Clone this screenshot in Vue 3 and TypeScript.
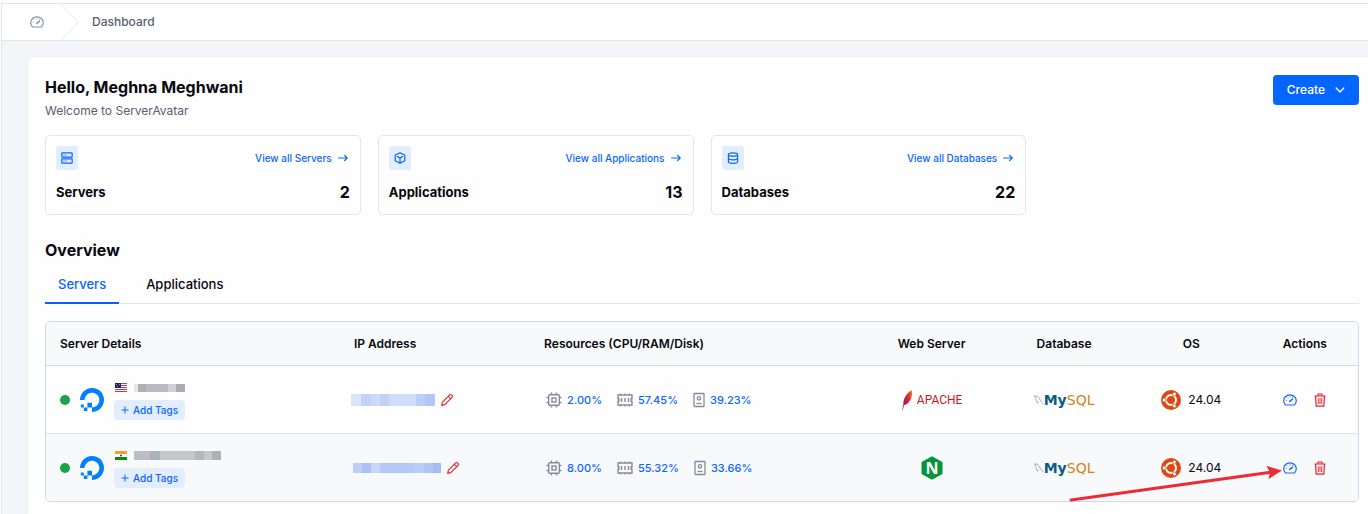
<script setup lang="ts">
import { ref } from 'vue'

interface Stat {
  name: string
  count: number
  icon: 'servers' | 'apps' | 'db'
}
interface Server {
  id: number
  flag: 'us' | 'in'
  cpu: string
  ram: string
  disk: string
  web: 'apache' | 'nginx'
  os: string
}

const stats: Stat[] = [
  { name: 'Servers', count: 2, icon: 'servers' },
  { name: 'Applications', count: 13, icon: 'apps' },
  { name: 'Databases', count: 22, icon: 'db' },
]
const servers: Server[] = [
  { id: 1, flag: 'us', cpu: '2.00%', ram: '57.45%', disk: '39.23%', web: 'apache', os: '24.04' },
  { id: 2, flag: 'in', cpu: '8.00%', ram: '55.32%', disk: '33.66%', web: 'nginx', os: '24.04' },
]
const tabs = ['Servers', 'Applications']
const activeTab = ref('Servers')
</script>

<template>
  <div class="page">
    <header class="topbar">
      <a class="home" href="#" aria-label="Home">
        <svg width="14" height="14" viewBox="0 0 14 14" fill="none" stroke="currentColor" stroke-width="1.200" stroke-linecap="round" stroke-linejoin="round">
          <path d="M2.600 12h8.800c1.200-1.100 1.900-2.500 1.900-4.200a6.300 6 0 0 0-12.600 0c0 1.700.7 3.100 1.900 4.200z" />
          <path d="M6.600 8.400 9.600 6.200" stroke-width="1.500" />
          <path d="M7 3.900v.2M4.400 4.900l.1.100M3.200 7.300h.2M9.600 4.400h.1" stroke-width="1" />
        </svg>
      </a>
      <svg class="chevron" width="20" height="36" viewBox="0 0 20 36" fill="none" stroke="#e2e4ea" stroke-width="1">
        <path d="M.5 0 18.500 18 .5 36" />
      </svg>
      <span class="crumb">Dashboard</span>
    </header>

    <main class="content">
      <section class="panel">
        <div class="intro">
          <div>
            <h1>Hello, Meghna Meghwani</h1>
            <p>Welcome to ServerAvatar</p>
          </div>
          <button class="create" type="button">
            Create
            <svg width="10" height="10" viewBox="0 0 10 10" fill="none" stroke="currentColor" stroke-width="1.300" stroke-linecap="round" stroke-linejoin="round"><path d="M1.200 3 5 7l3.800-4" /></svg>
          </button>
        </div>

        <div class="stats">
          <article v-for="s in stats" :key="s.name" class="stat">
            <div class="line">
              <span class="badge">
                <svg v-if="s.icon === 'servers'" width="12" height="12" viewBox="0 0 12 12" fill="none" stroke="currentColor" stroke-width="1.200">
                  <rect x=".8" y=".8" width="10.400" height="4.400" rx=".6" /><rect x=".8" y="6.800" width="10.400" height="4.400" rx=".6" />
                  <path d="M2.400 3h1.200M4.400 3h1M2.400 9h1.200M4.400 9h1" stroke-width=".9" />
                </svg>
                <svg v-else-if="s.icon === 'apps'" width="12" height="12" viewBox="0 0 12 12" fill="none" stroke="currentColor" stroke-width="1.200" stroke-linejoin="round">
                  <path d="M6 .7 10.800 3.300v5.400L6 11.300 1.200 8.700V3.300zM3 4.400 6 6l3-1.600M6 6v5.200" />
                </svg>
                <svg v-else width="12" height="12" viewBox="0 0 12 12" fill="none" stroke="currentColor" stroke-width="1.200">
                  <ellipse cx="6" cy="2.500" rx="4.600" ry="1.700" /><path d="M1.400 2.500v7C1.400 10.500 3.400 11.300 6 11.300s4.600-.8 4.600-1.800v-7M1.400 6C1.400 7 3.400 7.800 6 7.800S10.600 7 10.600 6" />
                </svg>
              </span>
              <a class="view" href="#">
                View all {{ s.name }}
                <svg width="10" height="10" viewBox="0 0 10 10" fill="none" stroke="currentColor" stroke-width="1.200" stroke-linecap="round" stroke-linejoin="round"><path d="M.6 5h8.600M6.600 2.400 9.200 5 6.600 7.600" /></svg>
              </a>
            </div>
            <div class="line">
              <h3>{{ s.name }}</h3>
              <strong>{{ s.count }}</strong>
            </div>
          </article>
        </div>

        <h2>Overview</h2>
        <div class="tabs" role="tablist">
          <button v-for="t in tabs" :key="t" type="button" role="tab" :aria-selected="activeTab === t" :class="{ active: activeTab === t }" @click="activeTab = t">{{ t }}</button>
        </div>

        <div class="table-wrap">
          <table>
            <colgroup>
              <col class="c-details" /><col class="c-ip" /><col class="c-res" /><col class="c-web" /><col class="c-db" /><col class="c-os" /><col class="c-act" />
            </colgroup>
            <thead>
              <tr>
                <th>Server Details</th>
                <th>IP Address</th>
                <th>Resources (CPU/RAM/Disk)</th>
                <th class="mid">Web Server</th>
                <th class="mid">Database</th>
                <th class="mid">OS</th>
                <th class="mid">Actions</th>
              </tr>
            </thead>
            <tbody>
              <tr v-for="s in servers" :key="s.id">
                <td>
                  <div class="details">
                    <span class="dot"></span>
                    <svg width="24" height="24" viewBox="0 0 24 24" fill="#0080ff">
                      <path d="M12 24v-4.650c4.930 0 8.740-4.880 6.850-10.070a6.950 6.950 0 0 0-4.150-4.150C9.510 3.250 4.630 7.060 4.630 11.980H0C0 4.140 7.590-1.980 15.810.59a11.500 11.500 0 0 1 7.600 7.600C25.980 16.410 19.860 24 12 24z" />
                      <path d="M7.400 14.800H12v4.600H7.400zM3.800 19.400h3.600V23H3.800zM.8 16.400h3v3h-3z" />
                    </svg>
                    <div class="names">
                      <div class="host">
                        <svg v-if="s.flag === 'us'" width="12" height="9" viewBox="0 0 12 9">
                          <path fill="#fff" d="M0 0h12v9H0z" /><path fill="#d0384a" d="M0 0h12v1H0zM0 2h12v1H0zM0 4h12v1H0zM0 6h12v1H0zM0 8h12v1H0z" /><path fill="#1b2a5c" d="M0 0h6v5H0z" /><path fill="#8d94b5" d="M1 1h1v1H1zM4 1h1v1H4zM2 3h1v1H2z" />
                        </svg>
                        <svg v-else width="12" height="9" viewBox="0 0 12 9">
                          <path fill="#fff" d="M0 0h12v9H0z" /><path fill="#ff9933" d="M0 0h12v3H0z" /><path fill="#128807" d="M0 6h12v3H0z" /><circle cx="6" cy="4.500" r="1" fill="#223388" />
                        </svg>
                        <span class="masked" :class="'host-' + s.id"></span>
                      </div>
                      <button class="tag" type="button">
                        <svg width="8" height="8" viewBox="0 0 8 8" stroke="currentColor"><path d="M4 .5v7M.5 4h7" /></svg>
                        Add Tags
                      </button>
                    </div>
                  </div>
                </td>
                <td>
                  <div class="ip">
                    <span class="masked" :class="'ip-' + s.id"></span>
                    <button class="plain red" type="button" aria-label="Edit IP address">
                      <svg width="12" height="12" viewBox="0 0 12 12" fill="none" stroke="currentColor" stroke-width="1.100" stroke-linejoin="round"><path d="M.7 11.400 1.400 8.200 8.700.9c1.300-1 3.400 1 2.400 2.400L3.800 10.600zM7.400 2.400 9.600 4.600" /></svg>
                    </button>
                  </div>
                </td>
                <td>
                  <div class="resources">
                    <span class="res">
                      <svg width="16" height="16" viewBox="0 0 16 16" fill="none" stroke="#858c99" stroke-width="1.400">
                        <rect x="2.700" y="2.700" width="10.600" height="10.600" rx="1" /><rect x="6" y="6" width="4" height="4" />
                        <path d="M5.500 .5v2M10.500 .5v2M5.500 13.500v2M10.500 13.500v2M.5 5.500h2M.5 10.500h2M13.500 5.500h2M13.500 10.500h2" />
                      </svg>
                      <a href="#">{{ s.cpu }}</a>
                    </span>
                    <span class="res">
                      <svg width="16" height="16" viewBox="0 0 16 16" fill="none" stroke="#858c99" stroke-width="1.400">
                        <path d="M1 3h14v3.800h-.8v2.400h.8V13H1V9.200h.8V6.800H1z" />
                        <path d="M4.500 6v4M8 6v4M11.500 6v4" />
                        <path d="M3.500 1.500V3M8 1.500V3M12.500 1.500V3M3.500 13v1.500M8 13v1.500M12.500 13v1.500" />
                      </svg>
                      <a href="#">{{ s.ram }}</a>
                    </span>
                    <span class="res">
                      <svg width="12" height="16" viewBox="0 0 12 16" fill="none" stroke="#858c99" stroke-width="1.300">
                        <rect x="1" y="1.500" width="10" height="13" rx=".6" /><circle cx="6" cy="6.300" r="1.700" /><path d="M3.500 11.500h5" />
                      </svg>
                      <a href="#">{{ s.disk }}</a>
                    </span>
                  </div>
                </td>
                <td>
                  <div v-if="s.web === 'apache'" class="brand">
                    <svg width="12" height="20" viewBox="0 0 12 20">
                      <defs>
                        <linearGradient id="feather" x1="1" y1="0" x2="0" y2="1"><stop offset="0" stop-color="#f69923" /><stop offset=".35" stop-color="#e0322f" /><stop offset=".65" stop-color="#c2185b" /><stop offset="1" stop-color="#6d4a9c" /></linearGradient>
                      </defs>
                      <path fill="url(#feather)" d="M10.800.2C11.700 2.400 11.200 6 9.600 9.200 8.100 12.300 6 14.600 3.300 15.100L1.700 19.800H1L2.400 15C1.900 11.400 3.200 8 5.300 5 6.900 2.700 8.800 1 10.800.2z" />
                      <path fill="none" stroke="#7d2050" stroke-width=".5" d="M9.500 2.500C6.500 6.500 4 11 2.700 15.500" />
                    </svg>
                    <span class="apache">APACHE</span>
                  </div>
                  <div v-else class="brand">
                    <svg width="22" height="24" viewBox="0 0 22 24" role="img" aria-label="nginx">
                      <path fill="#009639" stroke="#009639" stroke-linejoin="round" d="M11 .8 21 6.300v11.400L11 23.200 1 17.700V6.300z" />
                      <text x="11" y="17.500" text-anchor="middle" class="nginx">N</text>
                    </svg>
                  </div>
                </td>
                <td>
                  <div class="mysql">
                    <svg width="10" height="10" viewBox="0 0 10 10" fill="none" stroke="#6f9db8" stroke-width=".8" stroke-linecap="round">
                      <path d="M.6 1C2.800.4 4.500 1.800 5.500 3.800S7 7 9.200 8.800M.6 1C1.800 2 1.600 3 2 4.500S2.800 7.500 3.600 8.200L4.200 6.800" />
                    </svg>
                    <span class="word"><b>My</b>SQL</span>
                  </div>
                </td>
                <td>
                  <div class="os">
                    <svg width="20" height="20" viewBox="0 0 20 20">
                      <circle cx="10" cy="10" r="10" fill="#dd4814" />
                      <circle cx="10" cy="10" r="4.900" fill="none" stroke="#fff" stroke-width="2.200" />
                      <path stroke="#dd4814" stroke-width=".9" d="M10 10H3M10 10l3.500-6.060M10 10l3.500 6.060" />
                      <g fill="#fff" stroke="#dd4814" stroke-width=".7"><circle cx="3.200" cy="10" r="1.900" /><circle cx="13.400" cy="4.100" r="1.900" /><circle cx="13.400" cy="15.900" r="1.900" /></g>
                      <circle cx="10" cy="10" r="3.700" fill="#dd4814" />
                    </svg>
                    <span>{{ s.os }}</span>
                  </div>
                </td>
                <td>
                  <div class="actions">
                    <button class="plain blue" type="button" aria-label="Server dashboard">
                      <svg width="14" height="14" viewBox="0 0 14 14" fill="none" stroke="currentColor" stroke-width="1.200" stroke-linecap="round" stroke-linejoin="round">
                        <path d="M2.600 12h8.800c1.200-1.100 1.900-2.500 1.900-4.200a6.300 6 0 0 0-12.600 0c0 1.700.7 3.100 1.900 4.200z" />
                        <path d="M6.600 8.400 9.600 6.200" stroke-width="1.500" />
                        <path d="M7 3.900v.2M4.400 4.900l.1.100M3.200 7.300h.2M9.600 4.400h.1" stroke-width="1" />
                      </svg>
                    </button>
                    <button class="plain red" type="button" aria-label="Delete server">
                      <svg width="12" height="14" viewBox="0 0 12 14" fill="none" stroke="currentColor" stroke-width="1.200" stroke-linejoin="round">
                        <path d="M.4 3h11.200M4 3V1h4v2M1.500 3l.7 10.200h7.600L10.500 3" />
                        <path d="M4.300 5.200v5.800M6 5.200v5.800M7.700 5.200v5.800" stroke-width=".9" />
                      </svg>
                    </button>
                  </div>
                </td>
              </tr>
            </tbody>
          </table>
          <svg class="pointer" width="214" height="40" viewBox="0 0 214 40">
            <path stroke="#ec2c35" stroke-width="3" fill="none" stroke-linecap="round" d="M2 35 200 7.600" />
            <path fill="#ec2c35" d="M213 5.500 197.500 1 201 7.500 199.500 14z" />
          </svg>
        </div>
      </section>
    </main>
  </div>
</template>

<style>
body {
  margin: 0;
  background: #fdfdfe;
}
</style>

<style scoped>
.page {
  min-height: 100vh;
  box-sizing: border-box;
  padding: 3px 0 0 1px;
  display: flex;
  flex-direction: column;
  overflow: hidden;
  font-family: Inter, 'Liberation Sans', sans-serif;
  font-size: 12px;
  line-height: 16px;
  color: #06080f;
}
a {
  color: #0a66ff;
  text-decoration: none;
}
button {
  font: inherit;
  cursor: pointer;
}
svg {
  display: block;
  flex: none;
}
h1, h2, h3, p {
  margin: 0;
}
.topbar {
  display: flex;
  align-items: center;
  height: 36px;
  border: 1px solid #e2e4ea;
  border-right: 0;
  background: #fff;
}
.home {
  margin-left: 28px;
  color: #8a92a0;
}
.chevron {
  margin-left: 16px;
}
.crumb {
  margin-left: 12px;
  color: #566070;
  font-weight: 500;
}
.content {
  flex: 1;
  display: flex;
  border-left: 1px solid #e2e4ea;
  background: #f4f5f9;
  padding: 16px 0 0 26px;
}
.panel {
  flex: 1;
  min-width: 0;
  padding: 18px 9px 12px 17px;
  background: #fefefe;
  border-radius: 6px 0 0 0;
  box-shadow: 0 0 2px #dfe2e8;
}
.intro {
  display: flex;
  justify-content: space-between;
  align-items: flex-start;
  height: 60px;
}
h1, h2 {
  font-size: 16px;
  line-height: 24px;
  font-weight: 700;
}
h2 {
  margin-top: 23px;
}
.intro p {
  margin-top: 4px;
  color: #566070;
}
.create {
  display: flex;
  align-items: center;
  gap: 10px;
  height: 30px;
  padding: 0 14px;
  border: 0;
  border-radius: 4px;
  background: #0566ff;
  color: #fff;
  font-weight: 500;
}
.stats {
  display: grid;
  grid-template-columns: repeat(4, 1fr);
  gap: 17px;
}
.stat {
  border: 1px solid #e4e6ec;
  border-radius: 5px;
  padding: 10px;
  height: 58px;
  display: flex;
  flex-direction: column;
  justify-content: space-between;
}
.line {
  display: flex;
  align-items: center;
  justify-content: space-between;
}
.badge {
  display: grid;
  place-items: center;
  width: 22px;
  height: 24px;
  border-radius: 3px;
  background: #e2edff;
  color: #0a66ff;
}
.view {
  display: flex;
  align-items: center;
  gap: 6px;
  margin-right: 2px;
  font-size: 10px;
  font-weight: 500;
}
h3 {
  font-size: 13px;
  line-height: 24px;
  font-weight: 700;
}
.stat strong {
  font-size: 16px;
  line-height: 24px;
  font-weight: 700;
}
.tabs {
  display: flex;
  gap: 14px;
  margin-top: 4px;
  border-bottom: 1px solid #e1e4e9;
}
.tabs button {
  height: 38px;
  margin-bottom: -1px;
  padding: 0 13px;
  border: 0;
  border-bottom: 2px solid transparent;
  background: none;
  color: #06080f;
  font-size: 13px;
  font-weight: 500;
}
.tabs .active {
  color: #0a66ff;
  border-color: #0a5cff;
}
.table-wrap {
  position: relative;
  margin-top: 17px;
  border: 1px solid #cfd8e3;
  border-radius: 5px;
}
table {
  width: 100%;
  table-layout: fixed;
  border-collapse: separate;
  border-spacing: 0;
}
.c-details { width: 22.4%; }
.c-ip { width: 14.5%; }
.c-res { width: 25.6%; }
.c-web { width: 10%; }
.c-db { width: 10.2%; }
.c-os { width: 9.2%; }
.c-act { width: 8.1%; }
th {
  height: 43px;
  padding: 0 14px;
  border-bottom: 1px solid #d3d7de;
  background: #f8f9fb;
  text-align: left;
  font-size: 12px;
  font-weight: 600;
}
th:first-child { border-top-left-radius: 4px; }
th:last-child { border-top-right-radius: 4px; }
th.mid {
  padding: 0;
  text-align: center;
}
td {
  height: 67px;
  padding: 0;
}
tbody tr:first-child td {
  border-bottom: 1px solid #e1e4e9;
}
tbody tr:nth-child(2) td {
  background: #f8f9fb;
}
tbody tr:last-child td:first-child { border-bottom-left-radius: 4px; }
tbody tr:last-child td:last-child { border-bottom-right-radius: 4px; }
.details {
  display: flex;
  align-items: center;
  padding-left: 14px;
}
.dot {
  width: 10px;
  height: 10px;
  margin-right: 10px;
  border-radius: 50%;
  background: #16a34a;
}
.names {
  margin-left: 10px;
  padding-top: 2px;
}
.host {
  display: flex;
  align-items: center;
  height: 12px;
  padding-left: 1px;
  gap: 7px;
  margin-bottom: 6px;
}
.masked {
  display: block;
}
.host-1 {
  width: 51px;
  height: 8px;
  background: linear-gradient(90deg, #e6e6e9 4px, #adb0b7 4px 12px, #b7bac0 12px 34px, #d0d2d6 34px 42px, #a9acb4 42px);
}
.host-2 {
  width: 87px;
  height: 9px;
  background: linear-gradient(90deg, #bcbec4 16px, #adb1b9 16px 26px, #c5c7cb 26px 61px, #b4b7bd 61px 70px, #c6c8cd 70px 78px, #aeb1b8 78px);
}
.tag {
  display: flex;
  align-items: center;
  gap: 4px;
  height: 20px;
  padding: 0 7px;
  border: 0;
  border-radius: 4px;
  background: #e2edff;
  color: #0a66ff;
  font-size: 10px;
  font-weight: 500;
}
.ip {
  display: flex;
  align-items: center;
  gap: 6px;
  padding-left: 11px;
}
.ip-1 {
  width: 84px;
  height: 12px;
  background: linear-gradient(90deg, #dbe5fa 10px, #c3d3f8 10px 20px, #cddafa 20px 29px, #bdd3fa 29px 38px, #d0dcfa 38px 65px, #bccdf8 65px 75px, #b3c6f7 75px);
}
.ip-2 {
  width: 88px;
  height: 10px;
  margin-left: 2px;
  background: linear-gradient(90deg, #bccff7 9px, #a9c3f6 9px 18px, #c7d7f8 18px 27px, #b4c9f5 27px 62px, #bccef7 62px 71px, #b0c6f5 71px 80px, #a3bef5 80px);
}
.plain {
  padding: 0;
  border: 0;
  background: none;
}
.red { color: #ea1f2b; }
.blue { color: #1668f5; }
.resources {
  display: flex;
  gap: 15px;
  padding-left: 16px;
  font-size: 11px;
  font-weight: 500;
}
.res {
  display: flex;
  align-items: center;
  gap: 5px;
}
.brand, .mysql, .os, .actions {
  display: flex;
  align-items: center;
  justify-content: center;
}
.brand {
  gap: 4px;
}
.apache {
  font-family: Roboto, sans-serif;
  color: #c9151e;
}
.nginx {
  font: bold 16px 'Open Sans', sans-serif;
  fill: #fff;
}
.word {
  font-family: 'DejaVu Sans', sans-serif;
  font-size: 14px;
  color: #cf8421;
}
.word b {
  color: #0b5c85;
}
.os {
  gap: 7px;
}
.actions {
  gap: 17px;
}
.pointer {
  position: absolute;
  right: 75px;
  bottom: -4px;
  pointer-events: none;
}
</style>
